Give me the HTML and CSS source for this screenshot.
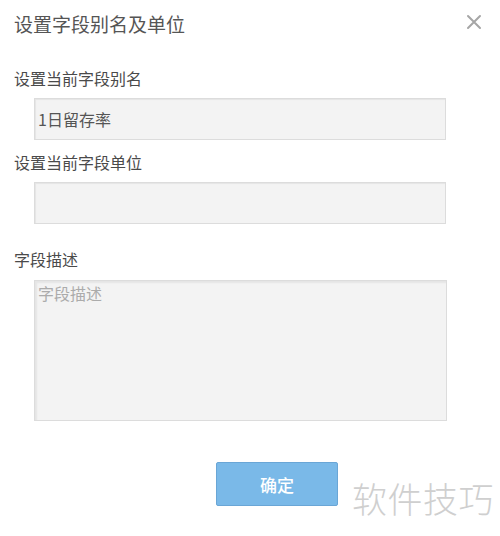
FILE: index.html
```html
<!DOCTYPE html>
<html lang="zh-CN">
<head>
<meta charset="utf-8">
<title>设置字段别名及单位</title>
<link rel="stylesheet" href="styles.css">
</head>
<body>
<div class="dialog">
  <div class="header">
    <div class="title">设置字段别名及单位</div>
    <svg class="close" width="16" height="16" viewBox="0 0 16 16" aria-label="关闭">
      <path d="M2 2 L14 14 M14 2 L2 14" stroke="#a6a6a6" stroke-width="2" stroke-linecap="round" fill="none"/>
    </svg>
  </div>
  <div class="form">
    <div class="label label-first">设置当前字段别名</div>
    <div class="input">1日留存率</div>
    <div class="label label-second">设置当前字段单位</div>
    <div class="input"></div>
    <div class="label label-third">字段描述</div>
    <div class="textarea"><span class="placeholder">字段描述</span></div>
    <div class="actions">
      <button class="btn-ok">确定</button>
    </div>
  </div>
  <div class="watermark">软件技巧</div>
</div>
</body>
</html>
```
FILE: styles.css
```css
html, body {
  margin: 0;
  padding: 0;
  background: #ffffff;
}
body {
  font-family: "Noto Sans CJK SC", "Noto Sans", sans-serif;
  width: 500px;
  height: 536px;
  overflow: hidden;
}
.dialog {
  position: relative;
  padding: 12px 18px 0 14px;
  height: 524px;
}
.header {
  display: flex;
  justify-content: space-between;
  align-items: center;
  height: 24px;
}
.title {
  font-size: 19px;
  line-height: 24px;
  color: #555555;
}
.close {
  display: block;
  margin-top: -4px;
}
.form {
  margin-top: 32px;
  display: flex;
  flex-direction: column;
}
.label {
  font-size: 16px;
  line-height: 20px;
  color: #4a4a4a;
}
.label-second {
  margin-top: 12px;
}
.label-third {
  margin-top: 25px;
}
.input {
  margin: 10px 0 0 20px;
  width: 412px;
  height: 42px;
  box-sizing: border-box;
  border: 1px solid #dcdcdc;
  background: #f3f3f3;
  box-shadow: inset 1px 1px 1px rgba(0,0,0,0.06);
  padding-left: 3px;
  font-size: 16px;
  line-height: 40px;
  color: #555555;
}
.textarea {
  margin: 11px 0 0 20px;
  width: 413px;
  height: 141px;
  box-sizing: border-box;
  border: 1px solid #dcdcdc;
  background: #f3f3f3;
  box-shadow: inset 2px 2px 2px rgba(0,0,0,0.06);
  padding: 2px 0 0 3px;
  font-size: 16px;
  line-height: 20px;
}
.placeholder {
  color: #ababab;
}
.actions {
  margin-top: 41px;
  padding-left: 202px;
}
.btn-ok {
  width: 122px;
  height: 44px;
  border: 1px solid #6aa6d6;
  border-radius: 2px;
  background: #7ab9e8;
  color: #ffffff;
  font-family: "Noto Sans CJK SC", sans-serif;
  font-size: 17px;
  font-weight: 500;
  padding: 0;
}
.watermark {
  position: absolute;
  left: 352px;
  top: 474px;
  font-size: 35px;
  line-height: 48px;
  font-weight: 300;
  color: #cfcfcf;
  letter-spacing: 0.5px;
}
```
